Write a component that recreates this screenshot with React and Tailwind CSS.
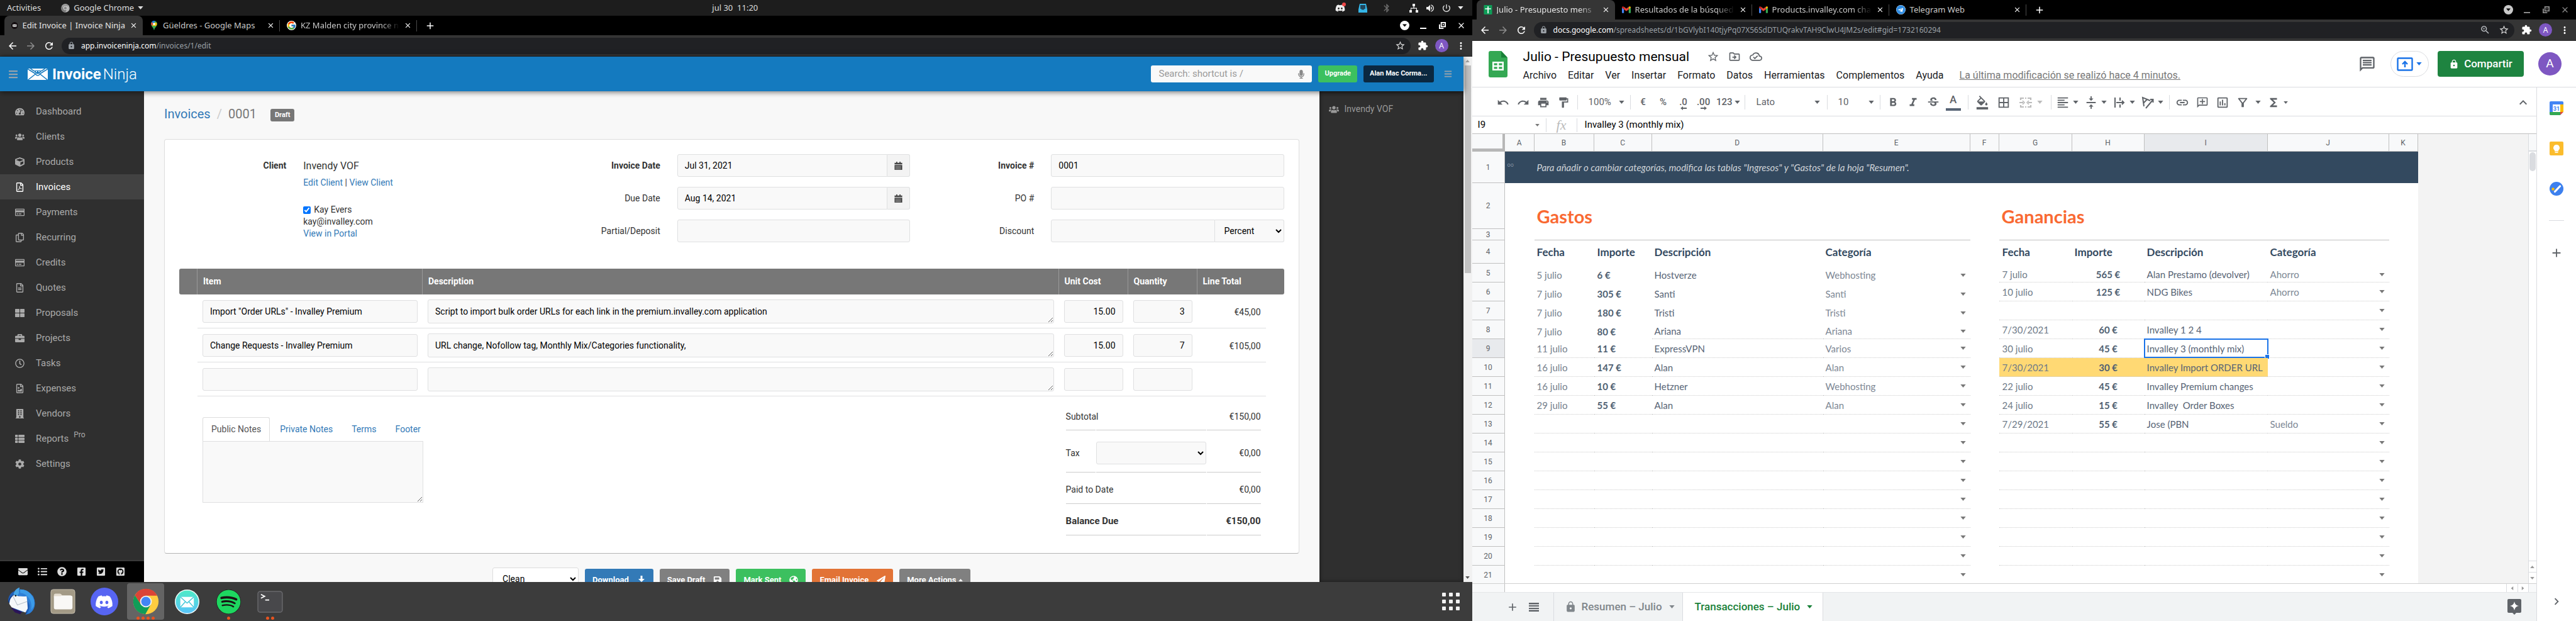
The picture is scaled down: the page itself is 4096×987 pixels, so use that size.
import React from "react";
import {
  FaTachometerAlt, FaUsers, FaCube, FaRegFilePdf, FaRegCreditCard, FaRegCopy, FaRegFileAlt, FaThLarge,
  FaBriefcase, FaRegClock, FaRegFileImage, FaBuilding, FaThList, FaCog, FaListUl,
  FaQuestionCircle, FaFacebookSquare, FaTwitterSquare, FaGithubSquare, FaMicrophone, FaSave, FaGlobeAmericas,
  FaPaperPlane, FaDiscord, FaSpotify, FaTelegram, FaBars, FaEnvelope,
} from "react-icons/fa";
import { FcGoogle } from "react-icons/fc";
import {
  MdUndo, MdRedo, MdPrint, MdFormatPaint, MdFormatBold, MdFormatItalic, MdStrikethroughS, MdFormatColorFill,
  MdBorderAll, MdFormatAlignLeft, MdVerticalAlignCenter, MdLink, MdExpandLess, MdStarBorder, MdExtension,
  MdMoreVert, MdArrowBack, MdArrowForward, MdRefresh, MdLock, MdClose, MdAdd, MdZoomIn, MdBluetooth,
  MdVolumeUp, MdPowerSettingsNew, MdFunctions, MdOutlineDriveFileMove, MdOutlineCloudDone,
  MdOutlineInsertComment, MdOutlineInsertChart, MdOutlineAddComment, MdOutlineFilterAlt, MdChevronRight,
} from "react-icons/md";

/* ---------- small shared drawings ---------- */

function Caret({ className = "w-[9px] h-[5px]", up = false }) {
  return (
    <svg viewBox="0 0 10 6" className={className} fill="currentColor" aria-hidden="true">
      <path d={up ? "M0 6L5 0l5 6z" : "M0 0h10L5 6z"} />
    </svg>
  );
}

function IconButton({ label, className = "", children }) {
  return (
    <button type="button" aria-label={label} className={`flex shrink-0 items-center justify-center ${className}`}>
      {children}
    </button>
  );
}

function NinjaEnvelope({ className }) {
  return (
    <svg viewBox="0 0 64 36" className={className} aria-hidden="true">
      <rect width="64" height="36" fill="#fff" />
      <path d="M0 1l24 15M64 1L40 16M1 36l23-18M63 36L40 18M24 16q8 12 16 0" fill="none" stroke="#147abf" strokeWidth="3" />
      <path d="M9 0q23 20 46 0" fill="none" stroke="#147abf" strokeWidth="3" />
      <path d="M23 6h18v5q-3 6-9 6t-9-6z" fill="#147abf" />
      <rect x="26" y="8" width="4" height="3" fill="#fff" />
      <rect x="34" y="8" width="4" height="3" fill="#fff" />
    </svg>
  );
}

function ChromeLogo({ className, mono = false }) {
  const c = mono ? ["#9a9a9a", "#7b7b7b", "#b5b5b5", "#8a8a8a"] : ["#db4437", "#0f9d58", "#ffcd40", "#4285f4"];
  return (
    <svg viewBox="0 0 48 48" className={className} aria-hidden="true">
      <circle cx="24" cy="24" r="23" fill={c[2]} />
      <path d="M4 12.500L14.900 29.250 24 34.500l9.100-5.250L23 47A23 23 0 0 1 4 12.500z" fill={c[1]} />
      <path d="M4 12.500L14.900 29.250 14 20l10-6.500h20.500A23 23 0 0 0 4 12.500z" fill={c[0]} />
      <circle cx="24" cy="24" r="10.700" fill="#f1f1f1" />
      <circle cx="24" cy="24" r="8.600" fill={c[3]} />
    </svg>
  );
}

function MapsPin() {
  return (
    <svg viewBox="0 0 20 28" className="h-[15px] w-[14px]" aria-hidden="true">
      <path d="M10 28C9 21 1 17 1 9.500A9 9 0 0 1 10 0a9 9 0 0 1 9 9.500C19 17 11 21 10 28z" fill="#34a853" />
      <path d="M3 4A9 9 0 0 1 10 0l4 1-7 6z" fill="#1a73e8" />
      <path d="M1 9q0-3 2-5l5 4-5 7Q1 12 1 9z" fill="#ea4335" />
      <path d="M4 15.500L13 5l5 1q2 5-2 9l-6 8z" fill="#fbbc04" />
      <path d="M10 28C9 21 6 19 4 15.500L16 15q-5 5-6 13z" fill="#34a853" />
      <circle cx="10" cy="9.500" r="3.500" fill="#fff" />
    </svg>
  );
}

function Gmail() {
  return (
    <svg viewBox="0 0 24 18" className="h-[11px] w-[14px]" aria-hidden="true">
      <path d="M0 3v13.500Q0 18 1.500 18H5.500V7z" fill="#4285f4" />
      <path d="M24 3v13.500q0 1.500-1.500 1.500H18.500V7z" fill="#34a853" />
      <path d="M18.500 1v6.500L24 3.500V2.500c0-2-2.500-3-4-2z" fill="#fbbc04" />
      <path d="M0 2.500v1L5.500 8V1L4 .500C2.500-.500 0 .500 0 2.500z" fill="#c5221f" />
      <path d="M5.500 1v7L12 13l6.500-5V1L12 6z" fill="#ea4335" />
    </svg>
  );
}

function SheetsFavicon() {
  return (
    <svg viewBox="0 0 14 16" className="h-[15px] w-[14px]" aria-hidden="true">
      <rect width="14" height="16" rx="1" fill="#0f9d58" />
      <path d="M6.200 2h1.800v3.500h4v1.800H8V14H6.200V7.300H2V5.500h4.200z" fill="#fff" />
    </svg>
  );
}

function NinjaFavicon() {
  return (
    <svg viewBox="0 0 16 16" className="size-[15px]" aria-hidden="true">
      <circle cx="8" cy="8" r="8" fill="#0c0508" />
      <rect x="3" y="5" width="10" height="6.500" fill="#ddd" />
      <path d="M3 5l5 4 5-4M3 11.500l3.500-3M13 11.500l-3.500-3" stroke="#333" fill="none" />
    </svg>
  );
}

function RestoreGlyph() {
  return (
    <svg viewBox="0 0 12 12" className="size-[11px]" fill="none" stroke="currentColor" strokeWidth="2" aria-hidden="true">
      <rect x="4" y="1" width="7" height="7" />
      <path d="M1 4v7h7" />
      <path d="M6.500 4.500h2" />
    </svg>
  );
}

/* ---------- browser chrome ---------- */

function Tab({ icon, title, active = false, faded = false }) {
  return (
    <div
      className={
        active
          ? "flex h-full w-[220px] items-center gap-[7px] rounded-t-lg bg-[#353535] pr-2 pl-[11px] text-[#e6e6e6]"
          : "flex h-full w-[218px] items-center gap-[7px] pl-[11px] text-[#c9c9c9]"
      }
    >
      {icon}
      <span className={`flex-1 whitespace-nowrap ${faded ? "[mask-image:linear-gradient(to_right,#000_82%,transparent)]" : ""}`}>{title}</span>
      <IconButton label={`Close ${title}`} className="text-[13px] text-white">
        <MdClose />
      </IconButton>
      {!active && <span className="h-[18px] w-px bg-[#4a4a4a]" />}
    </div>
  );
}

function Browser({ tabs, url, path, zoomed = false, dim = false, children }) {
  return (
    <section className="flex min-h-0 flex-1 flex-col">
      <div className="flex h-[31px] shrink-0 items-center bg-black pr-[10px] pl-[7px] font-['Noto_Sans',sans-serif] text-[13px]">
        {tabs.map((t, i) => (
          <Tab key={t.title} {...t} active={i === 0} />
        ))}
        <IconButton label="New tab" className="ml-[12px] text-[18px] text-white">
          <MdAdd />
        </IconButton>
        <div className={`ml-auto flex items-center gap-[15px] ${dim ? "text-[#8a8a8a]" : "text-white"}`}>
          <IconButton label="Search tabs" className={`size-[15px] rounded-full ${dim ? "bg-[#c9c9c9]" : "bg-white"} text-black`}>
            <Caret className="h-[5px] w-[7px]" />
          </IconButton>
          <IconButton label="Minimize" className="size-[15px]">
            <span className="mt-2 h-[2px] w-[10px] bg-current" />
          </IconButton>
          <IconButton label="Restore" className="size-[15px]">
            <RestoreGlyph />
          </IconButton>
          <IconButton label="Close window" className="size-[15px] text-[15px]">
            <MdClose />
          </IconButton>
        </div>
      </div>
      <div className="flex h-[34px] shrink-0 items-center gap-[11px] border-b border-[#252525] bg-[#353535] pr-[9px] pl-[11px] font-['Noto_Sans',sans-serif] text-[12px] text-white">
        <IconButton label="Back" className="text-[18px]"><MdArrowBack /></IconButton>
        <IconButton label="Forward" className="text-[18px] text-[#8c8c8c]"><MdArrowForward /></IconButton>
        <IconButton label="Reload" className="text-[18px]"><MdRefresh /></IconButton>
        <div className="flex h-[26px] flex-1 items-center rounded-full bg-[#202124] pr-2 pl-[9px]">
          <MdLock className="mr-[9px] text-[13px] text-[#9aa0a6]" />
          <span>{url}</span>
          <span className="text-[#9aa0a6]">{path}</span>
          <span className="flex-1" />
          {zoomed && <IconButton label="Zoom" className="mr-[13px] text-[17px] text-[#bdc1c6]"><MdZoomIn /></IconButton>}
          <IconButton label="Bookmark" className="text-[17px] text-[#dadada]"><MdStarBorder /></IconButton>
        </div>
        <IconButton label="Extensions" className="text-[17px]"><MdExtension /></IconButton>
        <IconButton label="Profile" className="size-[21px] rounded-full bg-[#7e57c2]">A</IconButton>
        <IconButton label="Menu" className="text-[18px]"><MdMoreVert /></IconButton>
      </div>
      {children}
    </section>
  );
}

/* ---------- invoice app ---------- */

const NAV = [
  ["Dashboard", FaTachometerAlt], ["Clients", FaUsers], ["Products", FaCube], ["Invoices", FaRegFilePdf],
  ["Payments", FaRegCreditCard], ["Recurring", FaRegCopy], ["Credits", FaRegCreditCard], ["Quotes", FaRegFileAlt],
  ["Proposals", FaThLarge], ["Projects", FaBriefcase], ["Tasks", FaRegClock], ["Expenses", FaRegFileImage],
  ["Vendors", FaBuilding], ["Reports", FaThList], ["Settings", FaCog],
];

const SOCIAL = [
  ["Contact", FaEnvelope], ["Forum", FaListUl], ["Help", FaQuestionCircle],
  ["Facebook", FaFacebookSquare], ["Twitter", FaTwitterSquare], ["GitHub", FaGithubSquare],
];

const fieldBox = "h-9 w-full rounded-[3px] border border-[#dfe0e1] bg-[#f9f9f9] px-[11px] text-black";

function CalendarGlyph() {
  return (
    <svg viewBox="0 0 14 15" className="h-[13px] w-[13px]" aria-hidden="true">
      <path d="M0 2h14v3H0zM3 0h2v2H3zM9 0h2v2H9zM0 6h14v9H0z" fill="#444" />
      <path d="M2 8.500h10M2 11h10M2 13.300h10" stroke="#e8e8e8" strokeWidth="1" strokeDasharray="1.500 1" />
    </svg>
  );
}

function FormRow({ id, label, bold = false, children }) {
  return (
    <div className="grid grid-cols-[30%_1fr] items-center gap-x-[27px]">
      <label htmlFor={id} className={`text-right ${bold ? "font-bold" : ""}`}>{label}</label>
      <div className="flex">{children}</div>
    </div>
  );
}

const ITEMS = [
  ['Import "Order URLs" - Invalley Premium', "Script to import bulk order URLs for each link in the premium.invalley.com application", "15.00", "3", "€45,00"],
  ["Change Requests - Invalley Premium", "URL change, Nofollow tag, Monthly Mix/Categories functionality,", "15.00", "7", "€105,00"],
  ["", "", "", "", ""],
];

function InvoiceCard() {
  return (
    <form className="rounded-[4px] border border-[#dddddd] border-b-[#b5b5b5] bg-white px-[23px] pt-[23px] pb-[28px]">
      <div className="grid grid-cols-3 gap-[27px]">
        <div className="grid grid-cols-[30%_1fr] items-start gap-x-[27px]">
          <span className="flex h-9 items-center justify-end font-bold">Client</span>
          <div className="leading-[19px]">
            <div className="flex h-9 items-center text-[16px]">Invendy VOF</div>
            <div>
              <a href="#edit" className="text-[#337ab7]">Edit Client</a> | <a href="#view" className="text-[#337ab7]">View Client</a>
            </div>
            <label htmlFor="contact" className="mt-6 flex items-center gap-[5px]">
              <input id="contact" type="checkbox" defaultChecked className="size-3 accent-[#0075ff]" />
              Kay Evers
            </label>
            <div>kay@invalley.com</div>
            <a href="#portal" className="text-[#337ab7]">View in Portal</a>
          </div>
        </div>
        <div className="flex flex-col gap-4">
          <FormRow id="date" label="Invoice Date" bold>
            <input id="date" className={`${fieldBox} rounded-r-none`} defaultValue="Jul 31, 2021" />
            <IconButton label="Pick invoice date" className="h-9 w-9 rounded-r-[3px] border border-l-0 border-[#dfe0e1] bg-[#f3f3f3]"><CalendarGlyph /></IconButton>
          </FormRow>
          <FormRow id="due" label="Due Date">
            <input id="due" className={`${fieldBox} rounded-r-none`} defaultValue="Aug 14, 2021" />
            <IconButton label="Pick due date" className="h-9 w-9 rounded-r-[3px] border border-l-0 border-[#dfe0e1] bg-[#f3f3f3]"><CalendarGlyph /></IconButton>
          </FormRow>
          <FormRow id="partial" label="Partial/Deposit">
            <input id="partial" className={fieldBox} />
          </FormRow>
        </div>
        <div className="flex flex-col gap-4">
          <FormRow id="number" label="Invoice #" bold>
            <input id="number" className={fieldBox} defaultValue="0001" />
          </FormRow>
          <FormRow id="po" label="PO #">
            <input id="po" className={fieldBox} />
          </FormRow>
          <FormRow id="discount" label="Discount">
            <input id="discount" className={`${fieldBox} rounded-r-none`} />
            <select aria-label="Discount type" className="h-9 w-[110px] shrink-0 rounded-r-[3px] border border-l-0 border-[#dfe0e1] bg-[#f9f9f9] pl-[11px] text-black">
              <option>Percent</option>
            </select>
          </FormRow>
        </div>
      </div>

      <table className="mt-[42px] w-full table-fixed border-separate border-spacing-0">
        <colgroup>
          <col className="w-[29px]" />
          <col className="w-[358px]" />
          <col />
          <col className="w-[110px]" />
          <col className="w-[110px]" />
          <col className="w-[109px]" />
          <col className="w-[29px]" />
        </colgroup>
        <thead>
          <tr className="h-[41px] bg-[#777777] text-left text-white">
            <th className="rounded-l-[3px] border-r border-[#999]" />
            <th className="border-r border-[#999] px-[9px]">Item</th>
            <th className="border-r border-[#999] px-[9px]">Description</th>
            <th className="border-r border-[#999] px-[9px]">Unit Cost</th>
            <th className="border-r border-[#999] px-[9px]">Quantity</th>
            <th className="rounded-r-[3px] px-[9px]" colSpan={2}>Line Total</th>
          </tr>
        </thead>
        <tbody>
          {ITEMS.map(([item, desc, cost, qty, total], i) => (
            <tr key={i} className="h-[54px]">
              <td />
              <td className="border-b border-[#dfe0e1] px-2">
                <input aria-label={`Item ${i + 1}`} className={`${fieldBox} block`} defaultValue={item} />
              </td>
              <td className="border-b border-[#dfe0e1] px-2">
                <textarea aria-label={`Description ${i + 1}`} className="block h-[38px] w-full rounded-[3px] border border-[#dfe0e1] bg-[#f9f9f9] px-[11px] py-2 leading-5 text-black" defaultValue={desc} />
              </td>
              <td className="border-b border-[#dfe0e1] px-2">
                <input aria-label={`Unit cost ${i + 1}`} className={`${fieldBox} block text-right`} defaultValue={cost} />
              </td>
              <td className="border-b border-[#dfe0e1] px-2">
                <input aria-label={`Quantity ${i + 1}`} className={`${fieldBox} block text-right`} defaultValue={qty} />
              </td>
              <td className="border-b border-[#dfe0e1] px-2 pt-1 text-right">{total}</td>
              <td />
            </tr>
          ))}
        </tbody>
      </table>

      <div className="flex items-start justify-between pr-9 pl-[37px]">
        <div className="mt-[33px] w-[351px]">
          <div className="flex gap-[2px] whitespace-nowrap" role="tablist">
            <button type="button" role="tab" aria-selected="true" className="h-[38px] rounded-t-[3px] border border-b-0 border-[#dddddd] px-[13px] text-[#555]">Public Notes</button>
            <button type="button" role="tab" className="h-[38px] px-[14px] text-[#337ab7]">Private Notes</button>
            <button type="button" role="tab" className="h-[38px] px-[14px] text-[#337ab7]">Terms</button>
            <button type="button" role="tab" className="h-[38px] px-[14px] text-[#337ab7]">Footer</button>
          </div>
          <textarea aria-label="Public Notes" className="block h-[98px] w-full border border-[#dfe0e1] bg-[#f9f9f9] p-2" />
        </div>
        <table className="mt-[11px] w-[312px] table-fixed border-separate border-spacing-x-px border-spacing-y-0 leading-[19px]">
          <colgroup>
            <col className="w-[47px]" />
            <col />
            <col className="w-[86px]" />
          </colgroup>
          <tbody>
            <tr>
              <td className="border-b border-[#cccccc] pt-3 pb-[11px] whitespace-nowrap">Subtotal</td>
              <td className="border-b border-[#cccccc]" />
              <td className="border-b border-[#cccccc] pt-3 pb-[11px] text-right">€150,00</td>
            </tr>
            <tr>
              <td className="border-b border-[#cccccc] pt-[18px] pb-3"><label htmlFor="tax">Tax</label></td>
              <td className="border-b border-[#cccccc] pt-[18px] pb-3">
                <select id="tax" className="block h-9 w-full rounded-[3px] border border-[#dfe0e1] bg-[#f9f9f9] text-black">
                  <option />
                </select>
              </td>
              <td className="border-b border-[#cccccc] pt-[18px] pb-3 text-right">€0,00</td>
            </tr>
            <tr>
              <td colSpan={2} className="border-b border-[#cccccc] pt-[18px] pb-3">Paid to Date</td>
              <td className="border-b border-[#cccccc] pt-[18px] pb-3 text-right">€0,00</td>
            </tr>
            <tr className="text-[15px] font-bold">
              <td colSpan={2} className="border-b border-[#cccccc] pt-[18px] pb-3">Balance Due</td>
              <td className="border-b border-[#cccccc] pt-[18px] pb-3 text-right">€150,00</td>
            </tr>
          </tbody>
        </table>
      </div>
    </form>
  );
}

function DownloadGlyph() {
  return (
    <svg viewBox="0 0 14 14" className="size-[14px]" fill="currentColor" aria-hidden="true">
      <path d="M5.500 0h3v5H12L7 10 2 5h3.500zM0 11h14v3H0z" />
    </svg>
  );
}

const actionBtn = "mt-[2px] flex h-9 items-center rounded-[3px] px-3 text-[13px] font-bold text-white";

function InvoiceApp() {
  return (
    <div className="flex min-h-0 flex-1 font-[Roboto,sans-serif] text-[14px] text-[#333333]">
      <div className="flex min-w-0 flex-1 flex-col">
        <header className="relative z-10 flex h-[55px] shrink-0 items-center bg-[#147abf] pr-[18px] pl-[13px] shadow-[0_1px_9px_rgba(0,0,0,0.6)]">
          <IconButton label="Toggle navigation" className="mr-[15px] text-[16px] text-[#96a3ac]"><FaBars /></IconButton>
          <a href="#home" className="flex items-center text-[24px] leading-7 text-white">
            <NinjaEnvelope className="mr-[7px] h-[18px] w-8" />
            <span className="mr-[3px] font-bold">Invoice</span>
            <span className="font-light">Ninja</span>
          </a>
          <div className="ml-auto flex items-center gap-[10px]">
            <div className="flex h-[27px] w-[256px] items-center rounded-[3px] bg-[#f9f9f9] pr-[10px] pl-3">
              <input aria-label="Search" placeholder="Search: shortcut is /" className="min-w-0 flex-1 bg-transparent text-[15px] text-black placeholder:text-[#999]" />
              <FaMicrophone className="text-[14px] text-[#888]" />
            </div>
            <button type="button" className="h-[27px] rounded-[3px] bg-[#3cc05f] px-[10px] text-[11px] font-bold text-white">Upgrade</button>
            <button type="button" className="h-[27px] rounded-[3px] bg-[#0b2840] px-[10px] text-[11px] font-bold text-white">Alan Mac Corma...</button>
            <IconButton label="Toggle history" className="ml-[6px] text-[13px] text-[#96a3ac]"><FaBars /></IconButton>
          </div>
        </header>
        <div className="flex min-h-0 flex-1">
          <nav className="flex w-[229px] shrink-0 flex-col bg-[#2f2f2f] text-[15px] text-[#aaaaaa]">
            <ul className="flex-1 pt-3">
              {NAV.map(([label, Icon]) => (
                <li key={label}>
                  <a href={`#${label}`} className={`flex h-10 items-center pl-6 ${label === "Invoices" ? "bg-[#424242] text-white" : ""}`}>
                    <Icon className="mr-[18px] size-[15px]" />
                    {label}
                    {label === "Reports" && <sup className="ml-2 text-[12px]">Pro</sup>}
                  </a>
                </li>
              ))}
            </ul>
            <div className="flex h-[35px] shrink-0 items-center gap-4 border-t-2 border-[#393939] bg-black pl-[29px] text-[#dddddd]">
              {SOCIAL.map(([label, Icon]) => (
                <a key={label} href={`#${label}`} aria-label={label}><Icon className="size-[15px]" /></a>
              ))}
            </div>
          </nav>
          <main className="min-w-0 flex-1 overflow-hidden bg-[#f8f8f8] px-8">
            <div className="mb-1 flex h-[72px] items-center text-[20px]">
              <a href="#invoices" className="text-[#337ab7]">Invoices</a>
              <span className="mx-[10px] text-[#cccccc]">/</span>
              <span className="text-[#777777]">0001</span>
              <span className="mt-1 ml-[22px] rounded-[3px] bg-[#777777] px-[7px] text-[11px] leading-5 font-bold text-white">Draft</span>
            </div>
            <InvoiceCard />
            <div className="mt-[22px] flex items-start justify-center gap-[10px]">
              <select aria-label="Design" className="h-9 w-[137px] rounded-[3px] border border-[#dddddd] bg-white pl-[11px] text-black">
                <option>Clean</option>
              </select>
              <button type="button" className={`${actionBtn} gap-[13px] bg-[#337ab7]`}>Download <DownloadGlyph /></button>
              <button type="button" className={`${actionBtn} gap-[13px] bg-[#808080]`}>Save Draft <FaSave className="size-[14px]" /></button>
              <button type="button" className={`${actionBtn} gap-[13px] bg-[#3cc05f]`}>Mark Sent <FaGlobeAmericas className="size-[14px]" /></button>
              <button type="button" className={`${actionBtn} gap-[13px] bg-[#e27336]`}>Email Invoice <FaPaperPlane className="size-[14px]" /></button>
              <button type="button" className={`${actionBtn} gap-[4px] bg-[#808080]`}>More Actions <Caret up className="h-1 w-[7px]" /></button>
            </div>
          </main>
          <aside className="w-[229px] shrink-0 bg-[#2f2f2f] pt-[18px] pl-[15px] text-[14px] text-[#999999] shadow-[inset_0_0_6px_rgba(0,0,0,0.5)]">
            <a href="#invendy" className="flex items-center gap-[9px]"><FaUsers className="size-4" /> Invendy VOF</a>
          </aside>
        </div>
      </div>
      <div className="flex w-[14px] shrink-0 flex-col items-center bg-[#f1f1f1]" aria-hidden="true">
        <span className="flex h-[14px] items-center text-[#a3a3a3]"><Caret up className="h-1 w-[7px]" /></span>
        <span className="h-[330px] w-[10px] bg-[#c1c1c1]" />
        <span className="mt-auto flex h-[15px] items-center text-[#505050]"><Caret className="h-1 w-[7px]" /></span>
      </div>
    </div>
  );
}

/* ---------- desktop dock ---------- */

function Thunderbird() {
  return (
    <svg viewBox="0 0 48 48" className="size-11" aria-hidden="true">
      <path d="M1 22C2 12 9 5 18 5L44 14q4 8 3 16-2 10-9 15l-7 2 2-5H14z" fill="#1f5fb8" />
      <path d="M13 9C15 3 19 0 21 0l-1 3q12-1 20 7 9 9 7 21-1 8-8 13l-6 2q6-8 5-16-2-10-14-13z" fill="#2e7fd6" />
      <path d="M22 3q12 0 19 9 7 9 5 20l-5 7q2-12-4-21-6-8-15-9z" fill="#3c9be8" />
      <path d="M10 16C10 7 15 1 21 0c-1 3-2 5-1 9l-5 9z" fill="#49a6e6" />
      <path d="M1 24q2-9 10-12l4 6-4 4-6 8z" fill="#123f8e" />
      <path d="M4 22q2-6 7-9 10 3 22 2l1 7 1 14-4 7-24-9-4-6z" fill="#f5f7fa" />
      <path d="M9 14l8 16 17-6" fill="none" stroke="#b9c2cc" strokeWidth="1.200" />
      <path d="M5 34l5 2 15 6-3 4-9-3z" fill="#2b1458" />
      <circle cx="14" cy="14" r="1.500" fill="#1b1b1b" />
    </svg>
  );
}

function FilesIcon() {
  return (
    <svg viewBox="0 0 42 42" className="size-10" aria-hidden="true">
      <rect x="1" y="1" width="40" height="40" rx="4" fill="#a39a86" stroke="#c9c2b2" />
      <path d="M6 11q0-3 3-3h7q2 0 4 3h13q4 0 4 3H6z" fill="#e4ddd0" />
      <path d="M6 12h11l3-1h13q4 0 4 3v17q0 3-3 3H9q-3 0-3-3z" fill="#f9f8f6" />
    </svg>
  );
}

function MailspringIcon() {
  return (
    <svg viewBox="0 0 40 40" className="size-[39px]" aria-hidden="true">
      <defs>
        <linearGradient id="spring" x1="0" y1="0" x2="0" y2="1">
          <stop offset="0" stopColor="#4eeac6" />
          <stop offset="1" stopColor="#59c4fa" />
        </linearGradient>
      </defs>
      <circle cx="20" cy="20" r="20" fill="#f4fbfb" />
      <circle cx="20" cy="20" r="18.500" fill="url(#spring)" />
      <rect x="9" y="12" width="22" height="17" fill="#fff" />
      <path d="M9 12l11 10 11-10M9 29l8-9M31 29l-8-9" fill="none" stroke="#45c8d8" strokeWidth="1.500" />
    </svg>
  );
}

function TerminalIcon() {
  return (
    <svg viewBox="0 0 42 36" className="h-[35px] w-[41px]" aria-hidden="true">
      <rect x="1" y="1" width="40" height="34" rx="4" fill="#48484b" stroke="#68686c" strokeWidth="1.500" />
      <path d="M6 6l6 3-6 3M13 15h6.500" fill="none" stroke="#fff" strokeWidth="1.800" />
    </svg>
  );
}

const DOCK = [
  { name: "Thunderbird", icon: <Thunderbird />, windows: 0 },
  { name: "Files", icon: <FilesIcon />, windows: 0 },
  {
    name: "Discord",
    icon: <span className="flex size-11 items-center justify-center rounded-full bg-[#5765f2] text-white"><FaDiscord className="size-[29px]" /></span>,
    windows: 0,
  },
  { name: "Google Chrome", icon: <ChromeLogo className="size-[42px]" />, windows: 4 },
  { name: "Mailspring", icon: <MailspringIcon />, windows: 0 },
  {
    name: "Spotify",
    icon: <span className="flex items-center justify-center rounded-full bg-[#191414] text-[#1ed760]"><FaSpotify className="size-[39px]" /></span>,
    windows: 1,
  },
  { name: "Terminal", icon: <TerminalIcon />, windows: 2 },
];

function Dock() {
  return (
    <footer className="flex h-[62px] shrink-0 items-center gap-[7px] bg-[#3c3c3c] pr-[20px] pl-1">
      {DOCK.map(({ name, icon, windows }) => (
        <button key={name} type="button" aria-label={name} className={`relative flex h-[58px] w-[59px] items-center justify-center rounded-[4px] ${windows === 4 ? "bg-[#646464]" : ""}`}>
          {icon}
          <span className="absolute inset-x-0 bottom-0 flex justify-center gap-[3px]">
            {Array.from({ length: windows }, (_, i) => (
              <span key={i} className="size-[5px] rounded-full bg-[#e95420]" />
            ))}
          </span>
        </button>
      ))}
      <button type="button" aria-label="Show applications" className="ml-auto grid grid-cols-3 gap-[5px]">
        {Array.from({ length: 9 }, (_, i) => (
          <span key={i} className="size-[6px] rounded-[1px] bg-[#f2f2f2]" />
        ))}
      </button>
    </footer>
  );
}

function TopBar() {
  return (
    <header className="grid h-[25px] shrink-0 grid-cols-3 items-center bg-[#1d1d1d] pr-[14px] pl-[11px] font-['Noto_Sans',sans-serif] text-[13px] text-[#dddddd]">
      <div className="flex items-center">
        <button type="button" className="mr-8">Activities</button>
        <button type="button" className="flex items-center gap-[6px]">
          <ChromeLogo mono className="size-[14px]" />
          Google Chrome
          <Caret />
        </button>
      </div>
      <button type="button" className="justify-self-center whitespace-pre">jul 30  11:20</button>
      <div className="flex items-center justify-self-end text-[16px] text-[#eeeeee]">
        <span className="relative mr-[21px]">
          <FaDiscord />
          <span className="absolute -top-px -right-px size-[6px] rounded-full bg-[#f04747]" />
        </span>
        <svg viewBox="0 0 14 14" className="mr-[23px] size-[14px]" aria-hidden="true">
          <path d="M2 0h10l2 9v5H0V9z" fill="#35b6e8" />
          <path d="M3 2h8v6H9.500L9 9.500H5L4.500 8H3z" fill="#20465c" />
        </svg>
        <MdBluetooth className="mr-[28px] text-[#6f6f6f]" />
        <svg viewBox="0 0 14 14" className="mr-[11px] size-[14px]" fill="currentColor" aria-hidden="true">
          <path d="M5 0h4v4H7.600v2.500H12V10h2v4h-4v-4h1V7.700H3V10h1v4H0v-4h2V6.500h4.400V4H5z" />
        </svg>
        <MdVolumeUp className="mr-[10px]" />
        <MdPowerSettingsNew className="mr-[10px]" />
        <Caret />
      </div>
    </header>
  );
}

/* ---------- spreadsheet ---------- */

const GASTOS = [
  ["5 julio", "6 €", "Hostverze", "Webhosting"],
  ["7 julio", "305 €", "Santi", "Santi"],
  ["7 julio", "180 €", "Tristi", "Tristi"],
  ["7 julio", "80 €", "Ariana", "Ariana"],
  ["11 julio", "11 €", "ExpressVPN", "Varios"],
  ["16 julio", "147 €", "Alan", "Alan"],
  ["16 julio", "10 €", "Hetzner", "Webhosting"],
  ["29 julio", "55 €", "Alan", "Alan"],
];

const GANANCIAS = [
  ["7 julio", "565 €", "Alan Prestamo (devolver)", "Ahorro"],
  ["10 julio", "125 €", "NDG Bikes", "Ahorro"],
  ["", "", "", ""],
  ["7/30/2021", "60 €", "Invalley 1 2 4", ""],
  ["30 julio", "45 €", "Invalley 3 (monthly mix)", ""],
  ["7/30/2021", "30 €", "Invalley Import ORDER URL", ""],
  ["22 julio", "45 €", "Invalley Premium changes", ""],
  ["24 julio", "15 €", "Invalley  Order Boxes", ""],
  ["7/29/2021", "55 €", "Jose (PBN", "Sueldo"],
];

const EMPTY = ["", "", "", ""];

function RowHead({ n }) {
  return (
    <th scope="row" className={`border-r border-b border-[#c0c0c0] align-middle font-[Roboto,sans-serif] text-[12px] leading-4 font-normal text-[#5f6368] ${n === 9 ? "bg-[#e8eaed]" : "bg-[#f8f9fa]"}`}>
      {n}
    </th>
  );
}

function CategoryCell({ text, className }) {
  return (
    <td className={`pr-[7px] pl-1 text-[#7d8794] ${className}`}>
      <div className="flex items-center justify-between">
        <span>{text || "\u00a0"}</span>
        <span className="text-[#777777]"><Caret /></span>
      </div>
    </td>
  );
}

function DataRow({ n }) {
  const left = GASTOS[n - 5] || EMPTY;
  const right = GANANCIAS[n - 5] || EMPTY;
  const line = "border-b border-dotted border-[#cccccc]";
  const la = n <= 8 ? "align-bottom" : "align-middle";
  const ra = n === 5 ? "align-bottom" : "align-middle";
  const lDate = `${la} ${n >= 9 ? line : ""}`;
  const lDesc = `${la} ${n >= 8 ? line : ""}`;
  const rc = `${ra} ${line}`;
  const mark = n === 10 ? "bg-[#ffd974]" : "";
  return (
    <tr className="h-[30px] leading-6 whitespace-pre">
      <RowHead n={n} />
      <td />
      <td className={`pl-1 text-[#76818e] ${lDate}`}>{left[0]}</td>
      <td className={`pl-[5px] font-bold text-[#4f5f72] ${lDate}`}>{left[1]}</td>
      <td className={`pl-1 text-[#576475] ${lDesc}`}>{left[2]}</td>
      <CategoryCell text={left[3]} className={lDesc} />
      <td />
      <td className={`pl-[5px] text-[#6f7b89] ${rc} ${mark}`}>{right[0]}</td>
      <td className={`text-center font-bold text-[#4f5f72] ${rc} ${mark}`}>{right[1]}</td>
      <td className={`relative pl-1 text-[#576475] ${rc} ${mark}`}>
        {right[2]}
        {n === 9 && (
          <span className="absolute -inset-px border-2 border-[#1a73e8]">
            <span className="absolute -right-1 -bottom-1 size-2 border border-white bg-[#1a73e8]" />
          </span>
        )}
      </td>
      <CategoryCell text={right[3]} className={rc} />
      <td />
    </tr>
  );
}

const COLUMNS = ["A", "B", "C", "D", "E", "F", "G", "H", "I", "J", "K"];

function SheetGrid() {
  return (
    <table className="w-[1504px] shrink-0 table-fixed border-separate border-spacing-0 self-start bg-white font-[Lato,sans-serif] text-[15px]">
      <colgroup>
        <col className="w-[52px]" />
        <col className="w-[47px]" />
        <col className="w-[95px]" />
        <col className="w-[92px]" />
        <col className="w-[272px]" />
        <col className="w-[234px]" />
        <col className="w-[46px]" />
        <col className="w-[116px]" />
        <col className="w-[115px]" />
        <col className="w-[196px]" />
        <col className="w-[193px]" />
        <col className="w-[46px]" />
      </colgroup>
      <thead>
        <tr className="h-7 font-[Roboto,sans-serif] text-[12px] text-[#5f6368]">
          <th className="border-r-4 border-b-[5px] border-[#b7b7b7] bg-[#f8f9fa]" />
          {COLUMNS.map((c) => (
            <th key={c} scope="col" className={`border-r border-b border-[#c0c0c0] font-normal ${c === "I" ? "bg-[#e8eaed]" : "bg-[#f8f9fa]"}`}>{c}</th>
          ))}
        </tr>
      </thead>
      <tbody>
        <tr className="h-[50px]">
          <RowHead n={1} />
          <td className="bg-[#33495f] pb-2 pl-1 text-[9px] text-[#8090a0]">oo</td>
          <td colSpan={10} className="bg-[#33495f] pl-1 text-[#cfd3d8] italic">
            Para añadir o cambiar categorías, modifica las tablas "Ingresos" y "Gastos" de la hoja "Resumen".
          </td>
        </tr>
        <tr className="h-[73px] align-bottom text-[29px] leading-10 font-bold text-[#f96932]">
          <RowHead n={2} />
          <td />
          <td colSpan={4} className="pl-1">Gastos</td>
          <td />
          <td colSpan={4} className="pl-1">Ganancias</td>
          <td />
        </tr>
        <tr className="h-[18px]">
          <RowHead n={3} />
          <td />
          <td colSpan={4} className="border-b border-[#c0c0c0]" />
          <td />
          <td colSpan={4} className="border-b border-[#c0c0c0]" />
          <td />
        </tr>
        <tr className="h-[37px] text-[17px] leading-6 font-bold text-[#33495f]">
          <RowHead n={4} />
          <td />
          <td className="pl-1">Fecha</td>
          <td className="pl-[5px]">Importe</td>
          <td className="pl-1">Descripción</td>
          <td className="pl-1">Categoría</td>
          <td />
          <td className="pl-[5px]">Fecha</td>
          <td className="pl-1">Importe</td>
          <td className="pl-1">Descripción</td>
          <td className="pl-1">Categoría</td>
          <td />
        </tr>
        {Array.from({ length: 17 }, (_, i) => (
          <DataRow key={i} n={i + 5} />
        ))}
      </tbody>
    </table>
  );
}

function SheetsLogo() {
  return (
    <svg viewBox="0 0 30 42" className="h-[42px] w-[30px]" aria-hidden="true">
      <path d="M3 0h17l10 10.500V39q0 3-3 3H3q-3 0-3-3V3q0-3 3-3z" fill="#34a853" />
      <path d="M20 0l10 10.500H20z" fill="#188038" />
      <path d="M6 17h18v14H6zM8.500 19.500v3.200h5.200v-3.200zM16.300 19.500v3.200h5.200v-3.200zM8.500 25.300v3.200h5.200v-3.200zM16.300 25.300v3.200h5.200v-3.200z" fill="#fff" fillRule="evenodd" />
    </svg>
  );
}

const MENUS = ["Archivo", "Editar", "Ver", "Insertar", "Formato", "Datos", "Herramientas", "Complementos", "Ayuda"];

function SheetsHeader() {
  return (
    <header className="flex h-[74px] shrink-0 items-center border-b border-[#dadce0] pr-[23px] pl-[26px] text-black">
      <SheetsLogo />
      <div className="ml-[25px] flex-1 pt-[6px]">
        <div className="flex h-[26px] items-center text-[21px] leading-[26px]">
          <h1>Julio - Presupuesto mensual</h1>
          <div className="ml-7 flex gap-[14px] text-[20px] text-[#5f6368]">
            <IconButton label="Star"><MdStarBorder /></IconButton>
            <IconButton label="Move"><MdOutlineDriveFileMove /></IconButton>
            <IconButton label="Saved to cloud"><MdOutlineCloudDone /></IconButton>
          </div>
        </div>
        <nav className="mt-[5px] flex gap-[18px] text-[16px] leading-6 text-[#202124]">
          {MENUS.map((m) => (
            <button key={m} type="button">{m}</button>
          ))}
          <a href="#history" className="ml-[7px] text-[#777777] underline">La última modificación se realizó hace 4 minutos.</a>
        </nav>
      </div>
      <IconButton label="Comments" className="text-[28px] text-[#5f6368]"><MdOutlineInsertComment className="-scale-x-100" /></IconButton>
      <button type="button" aria-label="Present" className="ml-[23px] flex h-[41px] w-[61px] items-center justify-center gap-[5px] rounded-full border border-[#dadce0] text-[#1a73e8]">
        <svg viewBox="0 0 26 22" className="h-[22px] w-[26px]" fill="none" stroke="currentColor" strokeWidth="2.400" aria-hidden="true">
          <rect x="1.500" y="1.500" width="23" height="19" rx="1" />
          <path d="M13 16V7M9 11l4-4 4 4" />
        </svg>
        <Caret />
      </button>
      <button type="button" className="ml-[14px] flex h-[41px] w-[137px] items-center justify-center gap-2 rounded-[4px] bg-[#1e8440] text-[17px] font-medium text-white">
        <MdLock className="size-4" /> Compartir
      </button>
      <IconButton label="Account" className="ml-[23px] size-[37px] rounded-full bg-[#7e57c2] text-[19px] text-white">A</IconButton>
    </header>
  );
}

function ToolGroup({ className = "", first = false, children }) {
  return <div className={`flex h-[23px] shrink-0 items-center ${first ? "" : "border-l border-[#dadce0]"} ${className}`}>{children}</div>;
}

function Tool({ label, children, className = "w-8" }) {
  return <IconButton label={label} className={className}>{children}</IconButton>;
}

function DropTool({ label, children }) {
  return (
    <button type="button" aria-label={label} className="flex w-[45px] items-center gap-[5px] pl-[5px] text-[22px]">
      {children}
      <Caret />
    </button>
  );
}

function DecimalTool({ label, text, right = false }) {
  return (
    <button type="button" aria-label={label} className="flex w-8 flex-col items-center pt-[5px] leading-[14px] font-medium">
      {text}
      <svg viewBox="0 0 10 6" className="h-[6px] w-[10px] self-center" fill="currentColor" aria-hidden="true">
        <path d={right ? "M0 2h6V0l4 3-4 3V4H0z" : "M10 2H4V0L0 3l4 3V4h6z"} />
      </svg>
    </button>
  );
}

function SheetsToolbar() {
  return (
    <div className="flex h-[46px] shrink-0 items-center border-b border-[#dadce0] pt-[2px] pr-[5px] pl-[33px] text-[15px] text-[#5f6368]">
      <ToolGroup first className="w-[134px] text-[20px]">
        <Tool label="Undo"><MdUndo /></Tool>
        <Tool label="Redo"><MdRedo /></Tool>
        <Tool label="Print"><MdPrint /></Tool>
        <Tool label="Paint format"><MdFormatPaint /></Tool>
      </ToolGroup>
      <ToolGroup className="w-[84px]">
        <button type="button" className="flex w-full items-center justify-between pr-[9px] pl-[17px]">100% <Caret /></button>
      </ToolGroup>
      <ToolGroup className="w-[182px] pl-1 font-medium">
        <Tool label="Currency">€</Tool>
        <Tool label="Percent">%</Tool>
        <DecimalTool label="Fewer decimals" text=".0" />
        <DecimalTool label="More decimals" text=".00" right />
        <button type="button" className="flex w-[42px] items-center justify-end gap-[3px]">123 <Caret /></button>
      </ToolGroup>
      <ToolGroup className="w-[131px]">
        <button type="button" className="flex w-full items-center justify-between pr-[11px] pl-[18px]">Lato <Caret /></button>
      </ToolGroup>
      <ToolGroup className="w-[84px]">
        <button type="button" className="flex w-full items-center justify-between pr-[9px] pl-[17px]">10 <Caret /></button>
      </ToolGroup>
      <ToolGroup className="w-[140px] pl-1 text-[22px]">
        <Tool label="Bold"><MdFormatBold /></Tool>
        <Tool label="Italic"><MdFormatItalic /></Tool>
        <Tool label="Strikethrough"><MdStrikethroughS /></Tool>
        <button type="button" aria-label="Text color" className="flex w-8 flex-col items-center gap-[5px]">
          <span className="text-[17px] leading-[17px] font-medium">A</span>
          <span className="h-1 w-6 bg-[#576475]" />
        </button>
      </ToolGroup>
      <ToolGroup className="w-[132px] pl-[5px] text-[22px]">
        <Tool label="Fill color" className="w-[34px]"><MdFormatColorFill /></Tool>
        <Tool label="Borders" className="w-[34px]"><MdBorderAll /></Tool>
        <button type="button" aria-label="Merge cells" className="flex w-[52px] items-center gap-2 pl-2 text-[#bbbbbb]">
          <svg viewBox="0 0 20 18" className="h-[18px] w-5" fill="none" stroke="currentColor" strokeWidth="2.200" aria-hidden="true">
            <path d="M2 5V2h5M18 5V2h-5M2 13v3h5M18 13v3h-5M9 2h2M9 16h2M0 9h6M20 9h-6" />
            <path d="M5 6l3 3-3 3M15 6l-3 3 3 3" strokeWidth="1.600" />
          </svg>
          <Caret />
        </button>
      </ToolGroup>
      <ToolGroup className="w-[188px] pl-[2px]">
        <DropTool label="Horizontal align"><MdFormatAlignLeft /></DropTool>
        <DropTool label="Vertical align"><MdVerticalAlignCenter /></DropTool>
        <DropTool label="Text wrapping">
          <svg viewBox="0 0 22 22" className="size-[22px]" fill="none" stroke="currentColor" strokeWidth="2" aria-hidden="true">
            <path d="M4 3v16M12 3v5M12 14v5M6 11h12M15 8l3 3-3 3" />
          </svg>
        </DropTool>
        <DropTool label="Text rotation">
          <svg viewBox="0 0 22 22" className="size-[22px]" fill="none" stroke="currentColor" strokeWidth="2" aria-hidden="true">
            <path d="M5 17L3 3l12 5M4 12l6-6M8 20L19 7M15 6h4.500v5" />
          </svg>
        </DropTool>
      </ToolGroup>
      <ToolGroup className="pl-1 text-[22px]">
        <Tool label="Insert link"><MdLink /></Tool>
        <Tool label="Insert comment"><MdOutlineAddComment className="size-5 -scale-x-100" /></Tool>
        <Tool label="Insert chart"><MdOutlineInsertChart /></Tool>
        <button type="button" aria-label="Filter" className="flex w-[50px] items-center gap-[9px] pl-[5px]"><MdOutlineFilterAlt /><Caret /></button>
        <button type="button" aria-label="Functions" className="flex items-center gap-[5px] pl-1"><MdFunctions /><Caret className="h-1 w-[7px]" /></button>
      </ToolGroup>
      <IconButton label="Hide menus" className="ml-auto w-8 text-[24px]"><MdExpandLess /></IconButton>
    </div>
  );
}

function SidePanel() {
  return (
    <aside className="flex w-[63px] shrink-0 flex-col items-center border-l border-[#dadce0] bg-white pt-[22px] text-[#5f6368]">
      <IconButton label="Calendar" className="mb-[42px]">
        <svg viewBox="0 0 22 22" className="size-[22px]" aria-hidden="true">
          <rect width="22" height="22" rx="2" fill="#4285f4" />
          <path d="M17 5h5v12h-5z" fill="#fbbc04" />
          <path d="M5 17h12v5H2q-2 0-2-2v-3z" fill="#34a853" />
          <path d="M17 17h5l-5 5z" fill="#ea4335" />
          <path d="M22 17v5h-5z" fill="#fff" />
          <path d="M5 5h12v12H5z" fill="#fff" />
          <text x="11" y="14.500" textAnchor="middle" fontSize="9" fontFamily="Roboto, sans-serif" fontWeight="700" fill="#4285f4">31</text>
        </svg>
      </IconButton>
      <IconButton label="Keep" className="mb-[42px]">
        <svg viewBox="0 0 22 22" className="size-[22px]" aria-hidden="true">
          <rect width="22" height="22" rx="2" fill="#fbbc2d" />
          <path d="M11 5a5 5 0 0 1 3 9v1.500H8V14a5 5 0 0 1 3-9zM8.500 16.500h5V18h-5z" fill="#fff" />
        </svg>
      </IconButton>
      <IconButton label="Tasks" className="mb-[39px]">
        <svg viewBox="0 0 22 22" className="size-[22px]" aria-hidden="true">
          <circle cx="11" cy="11" r="11" fill="#3d80ee" />
          <path d="M8.500 15.500L16.500 7" stroke="#fff" strokeWidth="3.200" strokeLinecap="round" />
          <circle cx="5.500" cy="11.500" r="2.200" fill="#fbbc04" />
        </svg>
      </IconButton>
      <span className="mb-[40px] h-px w-6 bg-[#dadce0]" />
      <IconButton label="Add-ons" className="text-[22px]"><MdAdd /></IconButton>
      <IconButton label="Hide side panel" className="mt-auto mb-[20px] text-[22px]"><MdChevronRight /></IconButton>
    </aside>
  );
}

function SheetsApp() {
  return (
    <div className="flex min-h-0 flex-1 flex-col bg-white font-[Roboto,sans-serif]">
      <SheetsHeader />
      <div className="flex min-h-0 flex-1">
        <div className="flex min-w-0 flex-1 flex-col">
          <SheetsToolbar />
          <div className="flex h-[28px] shrink-0 items-center border-b border-[#c0c0c0] text-[15px] text-black">
            <input aria-label="Name box" defaultValue="I9" className="w-[100px] pl-[9px]" />
            <span className="flex w-[17px] items-center text-[#777777]"><Caret className="h-1 w-[7px]" /></span>
            <label htmlFor="formula" className="flex h-[22px] w-[50px] items-center justify-center border-x border-[#dadce0] font-['Liberation_Serif',serif] text-[22px] leading-none text-[#bbbbbb] italic">fx</label>
            <input id="formula" defaultValue="Invalley 3 (monthly mix)" className="min-w-0 flex-1 pl-3" />
          </div>
          <div className="flex min-h-0 flex-1 overflow-hidden bg-[#f3f3f3]">
            <SheetGrid />
            <div className="ml-auto flex w-[13px] shrink-0 flex-col border-l border-[#dadce0] bg-white" aria-hidden="true">
              <span className="h-7 border-b-2 border-[#dadce0] bg-[#f8f9fa]" />
              <span className="mx-px mt-px h-[30px] rounded-full bg-[#dadce0]" />
              <span className="mt-auto flex h-[18px] items-center justify-center border-t border-[#dadce0] text-[#999]"><Caret up className="h-1 w-[7px]" /></span>
              <span className="flex h-[18px] items-center justify-center border-t border-[#dadce0] text-[#999]"><Caret className="h-1 w-[7px]" /></span>
            </div>
          </div>
          <div className="flex h-[14px] shrink-0 border-t border-[#d0d0d0] bg-white text-[#999]" aria-hidden="true">
            <span className="w-[52px] border-r border-[#c0c0c0] bg-[#f8f9fa]" />
            <span className="ml-auto flex w-[18px] items-center justify-center border-l border-[#dadce0]"><Caret className="h-1 w-[7px] rotate-90" /></span>
            <span className="flex w-[17px] items-center justify-center border-l border-[#dadce0]"><Caret className="h-1 w-[7px] -rotate-90" /></span>
            <span className="w-[13px] border-l border-[#dadce0] bg-[#f8f9fa]" />
          </div>
          <div className="flex h-[46px] shrink-0 items-center border-t border-[#e4e6e8] bg-[#f1f3f4] pl-[54px] text-[17px] font-medium text-[#80868b]">
            <IconButton label="Add sheet" className="mr-[16px] text-[20px] text-[#5f6368]"><MdAdd /></IconButton>
            <IconButton label="All sheets" className="mr-[23px] text-[#5f6368]">
              <svg viewBox="0 0 16 14" className="h-[14px] w-4" fill="currentColor" aria-hidden="true">
                <path d="M0 0h16v2.500H0zM0 4h16v2H0zM0 8h16v2H0zM0 11.500h16V14H0z" />
              </svg>
            </IconButton>
            <button type="button" className="flex h-full w-[206px] items-center border-x border-[#dadce0] pl-[17px] whitespace-nowrap">
              <MdLock className="mr-[8px] size-[19px]" /> Resumen – Julio <Caret className="ml-[11px] h-[5px] w-[9px]" />
            </button>
            <button type="button" className="flex h-full w-[223px] items-center border-r border-[#dadce0] bg-white pl-[19px] whitespace-nowrap text-[#188038]">
              Transacciones – Julio <Caret className="ml-[11px] h-[5px] w-[9px]" />
            </button>
            <IconButton label="Explore" className="mr-6 ml-auto">
              <svg viewBox="0 0 22 25" className="h-[25px] w-[22px]" aria-hidden="true">
                <path d="M2 0h18q2 0 2 2v18q0 2-2 2h-6l-3 3-3-3H2q-2 0-2-2V2q0-2 2-2z" fill="#5f6368" />
                <path d="M11 4q1 6 7 7-6 1-7 7-1-6-7-7 6-1 7-7z" fill="#fff" />
              </svg>
            </IconButton>
          </div>
        </div>
        <SidePanel />
      </div>
    </div>
  );
}

export default function App() {
  return (
    <div className="flex h-screen w-full overflow-hidden bg-black">
      <div className="flex h-full w-4/7 flex-col">
        <TopBar />
        <Browser
          url="app.invoiceninja.com"
          path="/invoices/1/edit"
          tabs={[
            { icon: <NinjaFavicon />, title: "Edit Invoice | Invoice Ninja" },
            { icon: <MapsPin />, title: "Güeldres - Google Maps" },
            { icon: <FcGoogle className="size-[15px] shrink-0 rounded-full bg-white" />, title: "KZ Malden city province n", faded: true },
          ]}
        >
          <InvoiceApp />
        </Browser>
        <Dock />
      </div>
      <div className="flex h-full w-3/7 flex-col">
        <Browser
          dim
          zoomed
          url="docs.google.com"
          path="/spreadsheets/d/1bGVlybI140tjyPq07X56SdDTUQrakvTAH9ClwU4JM2s/edit#gid=1732160294"
          tabs={[
            { icon: <SheetsFavicon />, title: "Julio - Presupuesto mens", faded: true },
            { icon: <Gmail />, title: "Resultados de la búsqued", faded: true },
            { icon: <Gmail />, title: "Products.invalley.com cha", faded: true },
            { icon: <FaTelegram className="size-[15px] shrink-0 rounded-full bg-white text-[#2f8de4]" />, title: "Telegram Web" },
          ]}
        >
          <SheetsApp />
        </Browser>
      </div>
    </div>
  );
}
